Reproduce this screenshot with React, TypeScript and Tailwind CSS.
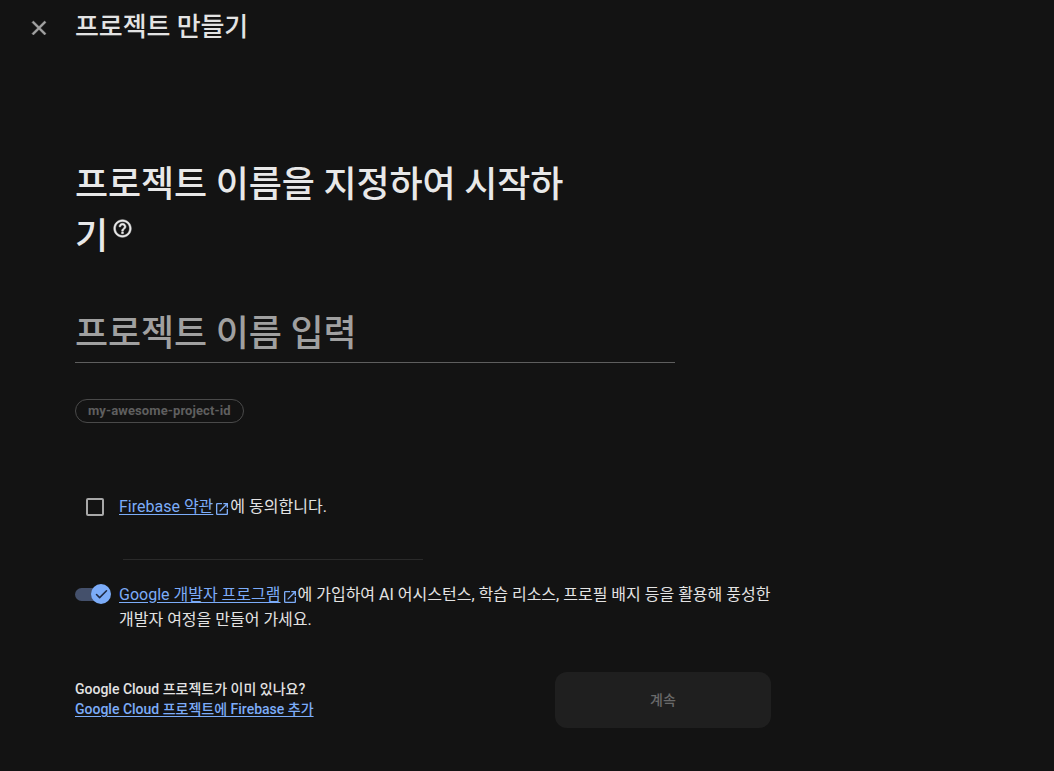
import { Check } from "lucide-react";

const font = "font-['Roboto','Noto_Sans_CJK_KR',sans-serif]";

function OpenInNew() {
  return (
    <svg viewBox="0 0 24 24" className="inline-block w-[16px] h-[16px] ml-[1px] -mb-[3px] fill-[#7cacf8]">
      <path d="M19 19H5V5h7V3H5a2 2 0 0 0-2 2v14a2 2 0 0 0 2 2h14c1.1 0 2-.9 2-2v-7h-2v7zM14 3v2h3.59l-9.83 9.83 1.41 1.41L19 6.41V10h2V3h-7z" />
    </svg>
  );
}

function LinkOut({ children }: { children: string }) {
  return (
    <>
      <a href="#" className="text-[#7cacf8] underline underline-offset-2">
        {children}
      </a>
      <OpenInNew />
    </>
  );
}

export default function App() {
  return (
    <div className={`${font} w-[1054px] h-[771px] overflow-hidden bg-[#131313] text-[#e3e3e3]`}>
      {/* Top bar */}
      <div className="flex items-center h-[56px] pl-[27px]">
        <svg viewBox="0 0 24 24" className="w-6 h-6 fill-[#a3a3a3] stroke-[#a3a3a3] stroke-[0.5]">
          <path d="M19 6.41 17.59 5 12 10.59 6.41 5 5 6.41 10.59 12 5 17.59 6.41 19 12 13.41 17.59 19 19 17.59 13.41 12z" />
        </svg>
        <h2 className="ml-[24px] text-[26px] font-medium -mt-[1px] tracking-[-0.1px]">프로젝트 만들기</h2>
      </div>

      <div className="pl-[75px] pt-[103px]">
        {/* Title */}
        <h1 className="w-[500px] text-[36px] leading-[52px] font-medium tracking-[-0.13px] text-[#e8e8e8]">
          프로젝트 이름을 지정하여 시작하기
          <svg viewBox="0 0 24 24" className="inline-block align-top mt-[7px] ml-[4px] w-[21px] h-[21px] fill-[#e8e8e8] stroke-[#e8e8e8] stroke-[0.6]">
            <path d="M11 18h2v-2h-2v2zm1-16C6.48 2 2 6.48 2 12s4.48 10 10 10 10-4.48 10-10S17.52 2 12 2zm0 18c-4.41 0-8-3.59-8-8s3.59-8 8-8 8 3.59 8 8-3.59 8-8 8zm0-14c-2.21 0-4 1.79-4 4h2c0-1.1.9-2 2-2s2 .9 2 2c0 2-3 1.75-3 5h2c0-2.25 3-2.5 3-5 0-2.21-1.79-4-4-4z" />
          </svg>
        </h1>

        {/* Name field */}
        <div className="mt-[41px] w-[600px] h-[59px] border-b border-[#5e5e5e] text-[36px] leading-[61px] font-medium tracking-[-0.13px] text-[#a0a0a0]">
          프로젝트 이름 입력
        </div>

        <div className="mt-[36px] inline-flex items-center h-[24px] px-[12px] rounded-full border border-[#4a4a4a] text-[13px] font-bold tracking-[0.1px] text-[#5f5f5f]">
          my-awesome-project-id
        </div>

        {/* Terms */}
        <div className="mt-[72px] flex items-center h-[24px] pl-[11px] text-[16px]">
          <span className="w-[18px] h-[18px] border-2 border-[#a8a8a8] rounded-[2px]" />
          <p className="ml-[15px]">
            <LinkOut>Firebase 약관</LinkOut>에 동의합니다.
          </p>
        </div>

        <div className="mt-[40px] ml-[48px] w-[300px] h-px bg-[#2a2a2a]" />

        {/* Developer program */}
        <div className="mt-[23px] flex items-start">
          <div className="relative w-[36px] h-[24px] shrink-0">
            <div className="absolute left-0 top-[5px] w-[32px] h-[13px] rounded-full bg-[#44506b]" />
            <div className="absolute left-[16px] top-[1px] w-[20px] h-[20px] rounded-full bg-[#7cacf8] flex items-center justify-center">
              <Check className="w-[15px] h-[15px] text-[#1f2a44]" strokeWidth={2.5} />
            </div>
          </div>
          <p className="ml-[8px] -mt-[1px] w-[660px] text-[16px] leading-[25px]">
            <LinkOut>Google 개발자 프로그램</LinkOut>에 가입하여 AI 어시스턴스, 학습 리소스, 프로필 배지 등을 활용해 풍성한 개발자 여정을 만들어 가세요.
          </p>
        </div>

        {/* Footer */}
        <div className="mt-[40px] w-[696px] flex items-center justify-between">
          <div className="text-[14px] leading-[20px] -mt-[2px]">
            <p className="font-medium">Google Cloud 프로젝트가 이미 있나요?</p>
            <a href="#" className="font-medium text-[#7cacf8] underline underline-offset-2">
              Google Cloud 프로젝트에 Firebase 추가
            </a>
          </div>
          <button className="w-[216px] h-[56px] rounded-[12px] bg-[#1f1f1f] text-[14px] font-medium text-[#6a6a6a]">
            계속
          </button>
        </div>
      </div>
    </div>
  );
}
